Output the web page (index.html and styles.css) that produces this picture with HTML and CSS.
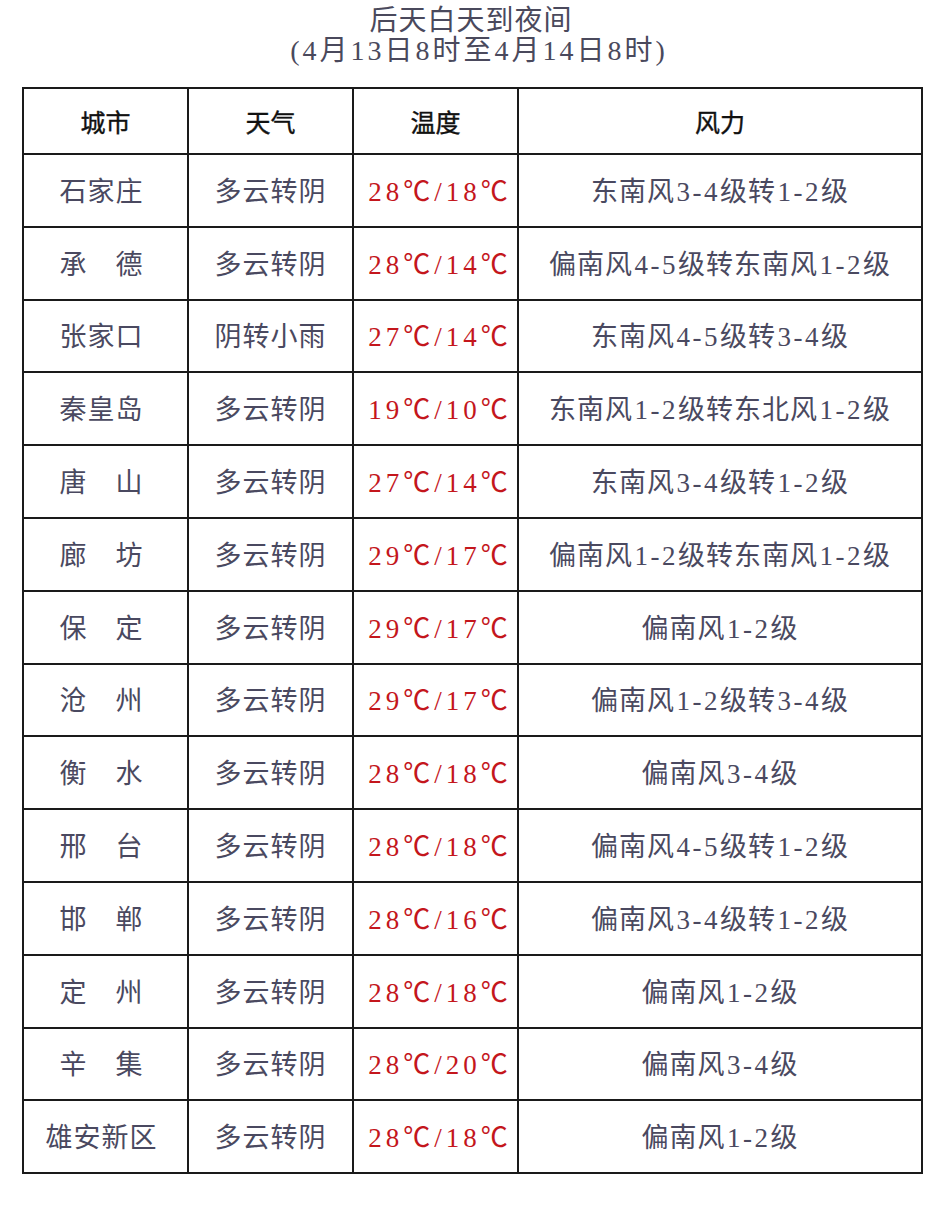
FILE: index.html
```html
<!DOCTYPE html>
<html lang="zh-CN">
<head>
<meta charset="utf-8">
<title>后天白天到夜间</title>
<link rel="stylesheet" href="styles.css">
</head>
<body>
<div class="title">
  <div class="t1">后天白天到夜间</div>
  <div class="t2">(4月13日8时至4月14日8时)</div>
</div>
<table class="wx">
  <colgroup>
    <col class="c1"><col class="c2"><col class="c3"><col class="c4">
  </colgroup>
  <thead>
    <tr><th>城市</th><th>天气</th><th>温度</th><th>风力</th></tr>
  </thead>
  <tbody>
    <tr><td class="city">石家庄</td><td>多云转阴</td><td class="temp">28℃/18℃</td><td>东南风<span class="n">3-4</span>级转<span class="n">1-2</span>级</td></tr>
    <tr><td class="city">承　德</td><td>多云转阴</td><td class="temp">28℃/14℃</td><td>偏南风<span class="n">4-5</span>级转东南风<span class="n">1-2</span>级</td></tr>
    <tr><td class="city">张家口</td><td>阴转小雨</td><td class="temp">27℃/14℃</td><td>东南风<span class="n">4-5</span>级转<span class="n">3-4</span>级</td></tr>
    <tr><td class="city">秦皇岛</td><td>多云转阴</td><td class="temp">19℃/10℃</td><td>东南风<span class="n">1-2</span>级转东北风<span class="n">1-2</span>级</td></tr>
    <tr><td class="city">唐　山</td><td>多云转阴</td><td class="temp">27℃/14℃</td><td>东南风<span class="n">3-4</span>级转<span class="n">1-2</span>级</td></tr>
    <tr><td class="city">廊　坊</td><td>多云转阴</td><td class="temp">29℃/17℃</td><td>偏南风<span class="n">1-2</span>级转东南风<span class="n">1-2</span>级</td></tr>
    <tr><td class="city">保　定</td><td>多云转阴</td><td class="temp">29℃/17℃</td><td>偏南风<span class="n">1-2</span>级</td></tr>
    <tr><td class="city">沧　州</td><td>多云转阴</td><td class="temp">29℃/17℃</td><td>偏南风<span class="n">1-2</span>级转<span class="n">3-4</span>级</td></tr>
    <tr><td class="city">衡　水</td><td>多云转阴</td><td class="temp">28℃/18℃</td><td>偏南风<span class="n">3-4</span>级</td></tr>
    <tr><td class="city">邢　台</td><td>多云转阴</td><td class="temp">28℃/18℃</td><td>偏南风<span class="n">4-5</span>级转<span class="n">1-2</span>级</td></tr>
    <tr><td class="city">邯　郸</td><td>多云转阴</td><td class="temp">28℃/16℃</td><td>偏南风<span class="n">3-4</span>级转<span class="n">1-2</span>级</td></tr>
    <tr><td class="city">定　州</td><td>多云转阴</td><td class="temp">28℃/18℃</td><td>偏南风<span class="n">1-2</span>级</td></tr>
    <tr><td class="city">辛　集</td><td>多云转阴</td><td class="temp">28℃/20℃</td><td>偏南风<span class="n">3-4</span>级</td></tr>
    <tr><td class="city">雄安新区</td><td>多云转阴</td><td class="temp">28℃/18℃</td><td>偏南风<span class="n">1-2</span>级</td></tr>
  </tbody>
</table>
</body>
</html>
```
FILE: styles.css
```css
html, body {
  margin: 0;
  padding: 0;
  background: #ffffff;
}
body {
  font-family: "Liberation Serif", "Noto Sans CJK SC", serif;
  color: #4a4960;
}
.title {
  height: 87px;
  box-sizing: border-box;
  padding-top: 6px;
  text-align: center;
  color: #4a495c;
  font-size: 28px;
  line-height: 29.5px;
}
.title .t1 {
  letter-spacing: 1px;
}
.title .t2 {
  letter-spacing: 3px;
  padding-left: 16px;
}
.wx {
  margin-left: 22px;
  width: 901px;
  border-collapse: collapse;
  table-layout: fixed;
}
.wx .c1, .wx .c2, .wx .c3 { width: 165px; }
.wx th, .wx td {
  border: 2px solid #1a1a1a;
  text-align: center;
  vertical-align: middle;
  padding: 0;
  white-space: nowrap;
}
.wx th {
  height: 64px;
  font-size: 25px;
  font-weight: normal;
  color: #111111;
  -webkit-text-stroke: 0.4px #111111;
}
.wx td {
  height: 68.8px;
  font-size: 27px;
  padding-bottom: 2px;
  letter-spacing: 1px;
}
.wx td.city {
  padding-right: 8px;
}
.wx td .n {
  letter-spacing: 2.5px;
  padding-left: 1.5px;
}
.wx td.temp {
  color: #c4161c;
  letter-spacing: 4px;
  padding-left: 9px;
}
```
